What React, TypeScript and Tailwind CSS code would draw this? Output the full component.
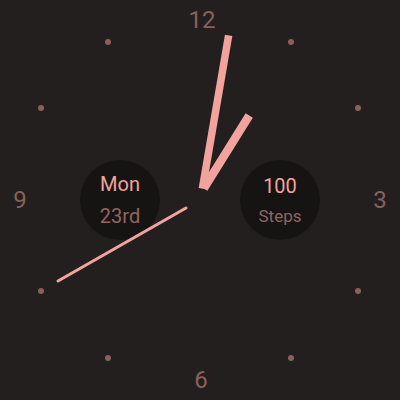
const font = { fontFamily: 'Roboto, "Noto Sans", sans-serif' };

const numerals = [
  { label: '12', cls: 'left-[202px] top-[20px]' },
  { label: '3', cls: 'left-[380px] top-[200px]' },
  { label: '6', cls: 'left-[201px] top-[380px]' },
  { label: '9', cls: 'left-[20px] top-[200px]' },
];

const dots = [
  'left-[291px] top-[42px]',
  'left-[358px] top-[108px]',
  'left-[358px] top-[291px]',
  'left-[291px] top-[358px]',
  'left-[108px] top-[358px]',
  'left-[41px] top-[291px]',
  'left-[41px] top-[108px]',
  'left-[108px] top-[42px]',
];

const Complication = ({ top, bottom, small }: { top: string; bottom: string; small?: boolean }) => (
  <div className="w-20 h-20 rounded-full bg-[#161413] flex flex-col items-center justify-center leading-none">
    <span className="text-[20px] text-[#f2a39d]">{top}</span>
    <span className={`${small ? 'text-[17px]' : 'text-[20px]'} text-[#8f6661] mt-[12px]`}>{bottom}</span>
  </div>
);

export default function App() {
  return (
    <div className="relative w-[400px] h-[400px] bg-[#231f1f] overflow-hidden" style={font}>
      {numerals.map((n) => (
        <span
          key={n.label}
          className={`absolute ${n.cls} -translate-x-1/2 -translate-y-1/2 text-[24px] leading-none text-[#8a605b]`}
        >
          {n.label}
        </span>
      ))}
      {dots.map((d) => (
        <span key={d} className={`absolute ${d} w-[6px] h-[6px] -translate-x-1/2 -translate-y-1/2 rounded-full bg-[#8a605b]`} />
      ))}

      <div className="absolute inset-0 flex items-center justify-between px-20">
        <Complication top="Mon" bottom="23rd" />
        <Complication top="100" bottom="Steps" small />
      </div>

      <svg className="absolute inset-0" width="400" height="400" viewBox="0 0 400 400">
        <line x1="186" y1="208" x2="58" y2="281" stroke="#f2a39d" strokeWidth="3" strokeLinecap="round" />
        <line x1="203" y1="185" x2="228" y2="39" stroke="#f2a39d" strokeWidth="7.5" strokeLinecap="square" />
        <line x1="206" y1="185" x2="247" y2="119" stroke="#f2a39d" strokeWidth="8.5" strokeLinecap="square" />
      </svg>
    </div>
  );
}
